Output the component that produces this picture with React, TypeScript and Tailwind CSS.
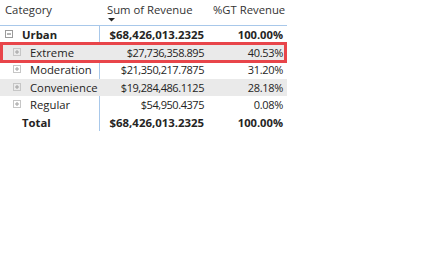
import React from "react";

const Box = ({ plus }: { plus?: boolean }) => (
  <svg width="8" height="8" viewBox="0 0 8 8" className="shrink-0 mt-[-1px]">
    <rect x="0.5" y="0.5" width="7" height="7" fill="none" stroke={plus ? "#c6c6c6" : "#9a9a9a"} />
    <line x1="2" y1="4" x2="6" y2="4" stroke={plus ? "#a0a0a0" : "#6a6a6a"} />
    {plus && <line x1="4" y1="2" x2="4" y2="6" stroke="#a0a0a0" />}
  </svg>
);

type Row = { label: string; sum: string; pct: string; kind: "parent" | "child" | "total"; shade?: boolean };

const rows: Row[] = [
  { label: "Urban", sum: "$68,426,013.2325", pct: "100.00%", kind: "parent" },
  { label: "Extreme", sum: "$27,736,358.895", pct: "40.53%", kind: "child", shade: true },
  { label: "Moderation", sum: "$21,350,217.7875", pct: "31.20%", kind: "child" },
  { label: "Convenience", sum: "$19,284,486.1125", pct: "28.18%", kind: "child", shade: true },
  { label: "Regular", sum: "$54,950.4375", pct: "0.08%", kind: "child" },
  { label: "Total", sum: "$68,426,013.2325", pct: "100.00%", kind: "total" },
];

export default function App() {
  return (
    <div className="w-[440px] h-[271px] bg-white text-[#252423] leading-none" style={{ fontFamily: '"Open Sans", "Noto Sans", sans-serif' }}>
      <div className="relative w-[287px]">
        <div className="flex h-[25px] text-[#333333] text-[11.3px]">
          <div className="w-[100px] pl-[5px] pt-[4px]">Category</div>
          <div className="w-[108px] pl-[7px] pt-[4px] flex flex-col">
            <span>Sum of Revenue</span>
            <svg width="8" height="4" viewBox="0 0 8 4" className="mt-[3px] ml-[1px]">
              <polygon points="0,0 7,0 3.5,3.5" fill="#252423" />
            </svg>
          </div>
          <div className="flex-1 pl-[5px] pt-[4px]">%GT Revenue</div>
        </div>
        <div className="h-px bg-[#a8c8ea]" />
        <div className="flex">
          <div className="w-[100px] border-r border-[#a8c8ea] h-[105px]" />
        </div>
        <div className="absolute left-0 top-[26px] w-[287px]">
          {rows.map((r) => {
            const bold = r.kind !== "child";
            return (
              <div key={r.label} className={`flex h-[17.5px] items-center ${r.shade ? "bg-[#eaeaea]" : ""} ${bold ? "font-bold" : ""}`}>
                <div className="w-[100px] flex items-center text-[11.3px]">
                  {r.kind === "parent" && (
                    <div className="flex items-center pl-[5px] gap-[9px]">
                      <Box />
                      <span>{r.label}</span>
                    </div>
                  )}
                  {r.kind === "child" && (
                    <div className="flex items-center pl-[13px] gap-[9px]">
                      <Box plus />
                      <span>{r.label}</span>
                    </div>
                  )}
                  {r.kind === "total" && <span className="pl-[22px]">{r.label}</span>}
                </div>
                <div className={`w-[104px] text-right ${bold ? "text-[11.4px]" : "text-[11px] tracking-[-0.45px]"}`}>{r.sum}</div>
                <div className={`flex-1 text-right pr-[4px] ${bold ? "text-[11.2px]" : "text-[11px] tracking-[-0.3px]"}`}>{r.pct}</div>
              </div>
            );
          })}
        </div>
        <div className="absolute left-0 top-[42px] w-[287px] h-[21px] border-[3px] border-[#e8454a]" />
      </div>
    </div>
  );
}
